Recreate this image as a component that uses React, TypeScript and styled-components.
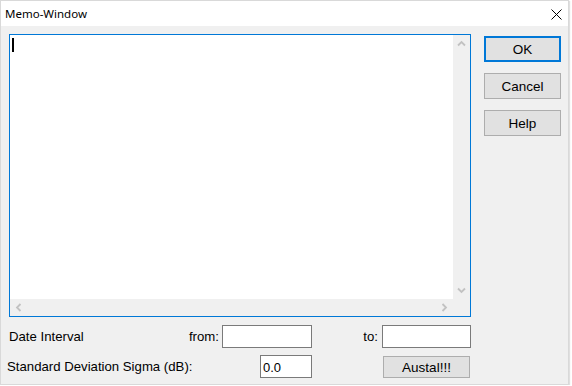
import styled, { createGlobalStyle } from "styled-components";

const GlobalStyle = createGlobalStyle`
  html, body {
    margin: 0;
    padding: 0;
    background: #ffffff;
  }
  body {
    font-family: "Liberation Sans", Arial, sans-serif;
    font-size: 13px;
    color: #000;
  }
`;

// Window frame
const Window = styled.div`
  width: 569px;
  height: 385px;
  box-sizing: border-box;
  border: 1px solid #d9d9d9;
  box-shadow: 1px 1px 1px rgba(0, 0, 0, 0.12);
  display: flex;
  flex-direction: column;
  background: #f0f0f0;
`;

const TitleBar = styled.div`
  height: 25px;
  flex: none;
  background: #ffffff;
  display: flex;
  align-items: center;
  justify-content: space-between;
  padding: 0 6px 0 4px;
`;

const Title = styled.span`
  font-family: "Noto Sans", "Open Sans", sans-serif;
  font-size: 11.5px;
  color: #000;
  margin-top: -1px;
`;

const CloseIcon = styled.svg`
  width: 11px;
  height: 11px;
  margin-top: 1px;
`;

const Client = styled.div`
  flex: 1;
  display: flex;
  flex-direction: column;
  padding: 8px 8px 0 8px;
`;

const TopArea = styled.div`
  display: flex;
`;

// Memo with scrollbars
const Memo = styled.div`
  width: 462px;
  height: 283px;
  flex: none;
  box-sizing: border-box;
  border: 1px solid #0078d7;
  display: grid;
  grid-template-columns: 1fr 17px;
  grid-template-rows: 1fr 17px;
  background: #f0f0f0;
`;

const TextArea = styled.div`
  background: #ffffff;
  padding: 3px 0 0 2px;
`;

const Caret = styled.div`
  width: 2px;
  height: 14px;
  background: #000;
`;

const VScroll = styled.div`
  display: flex;
  flex-direction: column;
  justify-content: space-between;
`;

const HScroll = styled.div`
  display: flex;
  justify-content: space-between;
`;

const ArrowBox = styled.div`
  width: 17px;
  height: 17px;
  display: flex;
  align-items: center;
  justify-content: center;
`;

const ButtonColumn = styled.div`
  display: flex;
  flex-direction: column;
  gap: 11px;
  margin-left: 13px;
  padding-top: 2px;
`;

const Button = styled.button<{ $default?: boolean; $w?: number; $h?: number }>`
  width: ${(p) => p.$w ?? 77}px;
  height: ${(p) => p.$h ?? 26}px;
  box-sizing: border-box;
  background: #e1e1e1;
  border: ${(p) => (p.$default ? "2px solid #0078d7" : "1px solid #adadad")};
  font-family: "Liberation Sans", Arial, sans-serif;
  font-size: 13.5px;
  color: #000;
  padding: 0;
  margin: 0;
  border-radius: 0;
`;

// Bottom rows
const Row = styled.div<{ $cols: string; $top: number }>`
  display: grid;
  grid-template-columns: ${(p) => p.$cols};
  height: 23px;
  margin-top: ${(p) => p.$top}px;
  align-items: center;
`;

const LabelCell = styled.div<{ $shift?: number }>`
  display: flex;
  justify-content: space-between;
  align-items: center;
  padding-right: 3px;
  margin-left: ${(p) => p.$shift ?? 0}px;
  white-space: nowrap;
  font-size: 13.2px;
`;

const RightLabel = styled.div`
  text-align: right;
  padding-right: 4px;
  font-size: 13.2px;
`;

const Field = styled.div`
  height: 23px;
  box-sizing: border-box;
  border: 1px solid #7a7a7a;
  background: #ffffff;
  padding: 0 0 0 2px;
  display: flex;
  align-items: center;
  padding-top: 1px;
`;

const ButtonCell = styled.div`
  align-self: end;
  display: flex;
`;

type Dir = "up" | "down" | "left" | "right";

const rotation: Record<Dir, number> = { up: 0, right: 90, down: 180, left: 270 };

const Chevron = ({ dir }: { dir: Dir }) => (
  <svg
    width="9"
    height="9"
    viewBox="0 0 9 9"
    style={{ transform: `rotate(${rotation[dir]}deg)` }}
  >
    <polyline
      points="1,6.5 4.5,3 8,6.5"
      fill="none"
      stroke="#c2c2c2"
      strokeWidth="1.8"
    />
  </svg>
);

const App = () => {
  return (
    <>
      <GlobalStyle />
      <Window>
        <TitleBar>
          <Title>Memo-Window</Title>
          <CloseIcon viewBox="0 0 11 11">
            <path d="M0.5 0.5 L10.5 10.5 M10.5 0.5 L0.5 10.5" stroke="#000" strokeWidth="1" />
          </CloseIcon>
        </TitleBar>
        <Client>
          <TopArea>
            <Memo>
              <TextArea>
                <Caret />
              </TextArea>
              <VScroll>
                <ArrowBox>
                  <Chevron dir="up" />
                </ArrowBox>
                <ArrowBox>
                  <Chevron dir="down" />
                </ArrowBox>
              </VScroll>
              <HScroll>
                <ArrowBox>
                  <Chevron dir="left" />
                </ArrowBox>
                <ArrowBox>
                  <Chevron dir="right" />
                </ArrowBox>
              </HScroll>
            </Memo>
            <ButtonColumn>
              <Button $default>OK</Button>
              <Button>Cancel</Button>
              <Button>Help</Button>
            </ButtonColumn>
          </TopArea>

          <Row $cols="213px 90px 70px 89px" $top={8}>
            <LabelCell>
              <span>Date Interval</span>
              <span>from:</span>
            </LabelCell>
            <Field />
            <RightLabel>to:</RightLabel>
            <Field />
          </Row>

          <Row $cols="251px 52px 71px 87px" $top={7}>
            <LabelCell $shift={-2}>
              <span>Standard Deviation Sigma (dB):</span>
            </LabelCell>
            <Field>0.0</Field>
            <div />
            <ButtonCell>
              <Button $w={87} $h={22}>
                Austal!!!
              </Button>
            </ButtonCell>
          </Row>
        </Client>
      </Window>
    </>
  );
};

export default App;
